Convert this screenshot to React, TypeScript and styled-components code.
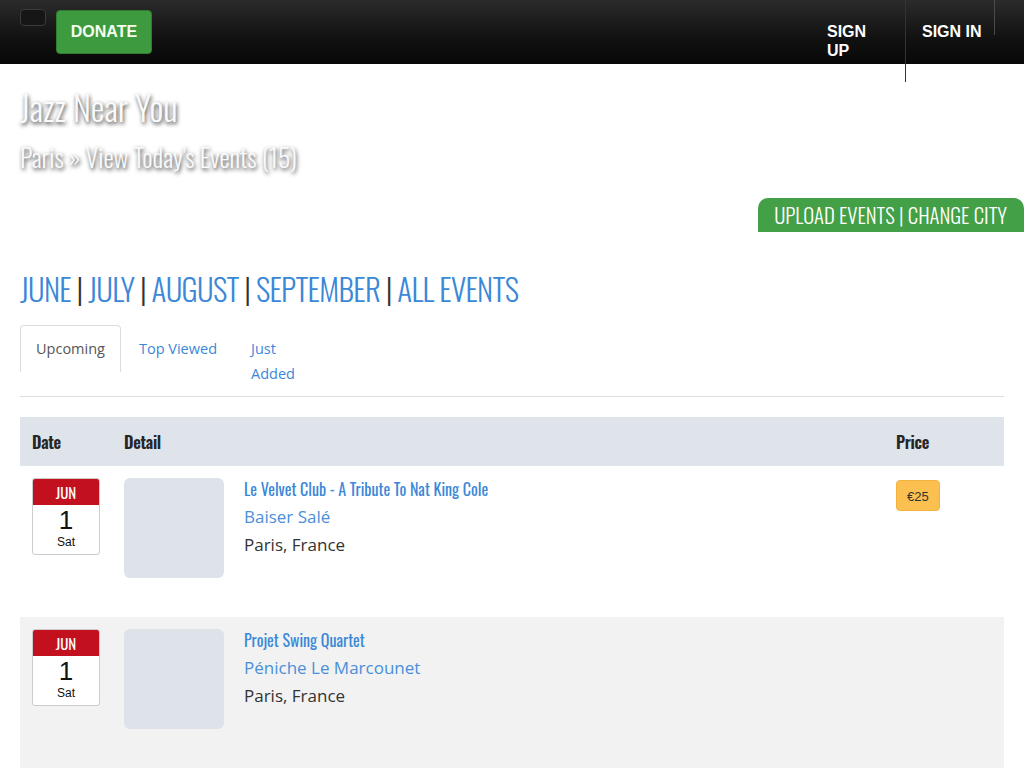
import styled, { createGlobalStyle } from "styled-components";

const GlobalStyle = createGlobalStyle`
  * { box-sizing: border-box; }
  body {
    margin: 0;
    background: #fff;
    font-family: "Open Sans", "Liberation Sans", sans-serif;
    color: #333;
  }
  a { text-decoration: none; }
`;

const oswald = `"Oswald", "DejaVu Sans Condensed", sans-serif`;

type EventItem = {
  month: string;
  day: string;
  weekday: string;
  title: string;
  venue: string;
  city: string;
  price?: string;
};

const events: EventItem[] = [
  {
    month: "JUN",
    day: "1",
    weekday: "Sat",
    title: "Le Velvet Club - A Tribute To Nat King Cole",
    venue: "Baiser Salé",
    city: "Paris, France",
    price: "€25",
  },
  {
    month: "JUN",
    day: "1",
    weekday: "Sat",
    title: "Projet Swing Quartet",
    venue: "Péniche Le Marcounet",
    city: "Paris, France",
  },
];

const months = ["JUNE", "JULY", "AUGUST", "SEPTEMBER", "ALL EVENTS"];

export default function App() {
  return (
    <>
      <GlobalStyle />
      <NavBar>
        <Toggler />
        <DonateButton>DONATE</DonateButton>
        <NavRight>
          <NavItem $wide>SIGN UP</NavItem>
          <NavItem $short>SIGN IN</NavItem>
        </NavRight>
      </NavBar>
      <Page>
        <Title>Jazz Near You</Title>
        <SubTitle>Paris » View Today's Events (15)</SubTitle>
        <ActionRow>
          <ActionTab>UPLOAD EVENTS | CHANGE CITY</ActionTab>
        </ActionRow>
        <MonthNav>
          {months.map((m, i) => (
            <span key={m}>
              {i > 0 && <Sep> | </Sep>}
              <MonthLink href="#">{m}</MonthLink>
            </span>
          ))}
        </MonthNav>
        <Tabs>
          <Tab $active>Upcoming</Tab>
          <Tab>Top Viewed</Tab>
          <Tab $narrow>Just Added</Tab>
        </Tabs>
        <Table>
          <HeadRow>
            <HeadCell>Date</HeadCell>
            <HeadCell>Detail</HeadCell>
            <HeadCell>Price</HeadCell>
          </HeadRow>
          {events.map((ev, i) => (
            <Row key={i} $striped={i % 2 === 1}>
              <Cell>
                <DateBadge>
                  <DateMonth>{ev.month}</DateMonth>
                  <DateDay>{ev.day}</DateDay>
                  <DateWeek>{ev.weekday}</DateWeek>
                </DateBadge>
              </Cell>
              <Cell>
                <Detail>
                  <Thumb />
                  <Info>
                    <EventTitle href="#">{ev.title}</EventTitle>
                    <Venue href="#">{ev.venue}</Venue>
                    <City>{ev.city}</City>
                  </Info>
                </Detail>
              </Cell>
              <Cell>{ev.price && <PriceTag>{ev.price}</PriceTag>}</Cell>
            </Row>
          ))}
        </Table>
      </Page>
    </>
  );
}

const NavBar = styled.header`
  height: 64px;
  background: linear-gradient(to bottom, #2b2b2b 0%, #111 60%, #080808 100%);
  display: flex;
  align-items: flex-start;
  padding-left: 20px;
`;

const Toggler = styled.div`
  width: 26px;
  height: 17px;
  margin-top: 9px;
  border: 1px solid #3a3a3a;
  border-radius: 4px;
  background: #161616;
`;

const DonateButton = styled.button`
  margin: 10px 0 0 10px;
  width: 96px;
  height: 44px;
  background: #3e9a3e;
  border: 1px solid #2f7d2f;
  border-radius: 4px;
  color: #f4fff0;
  font-family: "Liberation Sans", Arial, sans-serif;
  font-weight: bold;
  font-size: 16px;
`;

const NavRight = styled.ul`
  display: flex;
  margin: 0 29px 0 auto;
  padding: 0;
  list-style: none;
`;

const NavItem = styled.li<{ $wide?: boolean; $short?: boolean }>`
  width: ${(p) => (p.$wide ? "95px" : "89px")};
  height: ${(p) => (p.$short ? "35px" : "82px")};
  padding: 22px 16px 0;
  border-right: 1px solid ${(p) => (p.$short ? "#4a4a4a" : "#333")};
  color: #fff;
  font-family: "Liberation Sans", Arial, sans-serif;
  font-weight: bold;
  font-size: 16px;
  line-height: 19px;
  white-space: ${(p) => (p.$short ? "nowrap" : "normal")};
  position: relative;
  z-index: 1;
`;

const Page = styled.main`
  padding: 0 20px;
`;

const Title = styled.h1`
  margin: 23px 0 0;
  font-family: ${oswald};
  font-weight: 300;
  font-size: 34.5px;
  line-height: 40px;
  color: #fafafa;
  text-shadow: 1px 2px 4px rgba(0, 0, 0, 0.8);
`;

const SubTitle = styled.h2`
  margin: 13px 0 0;
  font-family: ${oswald};
  font-weight: 300;
  font-size: 25.7px;
  line-height: 32px;
  color: #fafafa;
  text-shadow: 1px 2px 4px rgba(0, 0, 0, 0.8);
`;

const ActionRow = styled.div`
  display: flex;
  justify-content: flex-end;
  margin: 26px -20px 0 0;
`;

const ActionTab = styled.a`
  height: 34px;
  padding: 0 17px 0 16px;
  background: #43a047;
  border-radius: 10px 10px 0 0;
  color: #fff;
  font-family: ${oswald};
  font-weight: 300;
  font-size: 20.8px;
  line-height: 34px;
`;

const MonthNav = styled.nav`
  margin-top: 36px;
  font-family: ${oswald};
  font-weight: 300;
  font-size: 31px;
  letter-spacing: -0.7px;
  line-height: 40px;
`;

const MonthLink = styled.a`
  color: #3b88d8;
`;

const Sep = styled.span`
  color: #333;
`;

const Tabs = styled.div`
  display: flex;
  align-items: flex-start;
  margin-top: 17px;
  border-bottom: 1px solid #ddd;
  height: 72px;
`;

const Tab = styled.a<{ $active?: boolean; $narrow?: boolean }>`
  padding: 10px 15px 12px;
  margin-right: 2px;
  font-size: 14.5px;
  line-height: 25px;
  color: ${(p) => (p.$active ? "#555" : "#3b88d8")};
  border: 1px solid ${(p) => (p.$active ? "#ddd" : "transparent")};
  border-bottom: none;
  border-radius: 4px 4px 0 0;
  background: ${(p) => (p.$active ? "#fff" : "transparent")};
  height: ${(p) => (p.$active ? "47px" : "auto")};
  width: ${(p) => (p.$narrow ? "76px" : "auto")};
`;

const Table = styled.div`
  margin-top: 20px;
`;

const HeadRow = styled.div`
  display: grid;
  grid-template-columns: 92px 1fr 120px;
  background: #dfe3ea;
  height: 49px;
  align-items: center;
`;

const HeadCell = styled.div`
  padding: 0 12px;
  font-family: ${oswald};
  font-weight: 600;
  font-size: 16.5px;
  letter-spacing: -0.3px;
  color: #262626;
`;

const Row = styled.div<{ $striped?: boolean }>`
  display: grid;
  grid-template-columns: 92px 1fr 120px;
  min-height: 151px;
  background: ${(p) => (p.$striped ? "#f2f2f2" : "#fff")};
`;

const Cell = styled.div`
  padding: 12px;
`;

const DateBadge = styled.div`
  width: 68px;
  border: 1px solid #ccc;
  border-radius: 3px;
  overflow: hidden;
  background: #fff;
  text-align: center;
  font-family: "Liberation Sans", Arial, sans-serif;
`;

const DateMonth = styled.div`
  background: #c3101f;
  color: #fff;
  height: 26px;
  line-height: 27px;
  font-family: ${oswald};
  font-weight: 400;
  font-size: 15px;
`;

const DateDay = styled.div`
  font-size: 26px;
  line-height: 30px;
  color: #111;
`;

const DateWeek = styled.div`
  font-size: 12px;
  line-height: 14px;
  padding-bottom: 5px;
  color: #111;
`;

const Detail = styled.div`
  display: flex;
  gap: 20px;
`;

const Thumb = styled.div`
  width: 100px;
  height: 100px;
  border-radius: 6px;
  background: #dee3ea;
  flex-shrink: 0;
`;

const Info = styled.div`
  display: flex;
  flex-direction: column;
  align-items: flex-start;
`;

const EventTitle = styled.a`
  font-family: ${oswald};
  font-weight: 400;
  font-size: 16px;
  line-height: 22px;
  color: #3b88d8;
`;

const Venue = styled.a`
  margin-top: 6px;
  font-size: 17px;
  line-height: 22px;
  color: #4a8fd8;
`;

const City = styled.div`
  margin-top: 6px;
  font-size: 17px;
  line-height: 22px;
  color: #333;
`;

const PriceTag = styled.span`
  display: inline-block;
  margin-top: 2px;
  padding: 0 10px;
  height: 31px;
  line-height: 31px;
  background: #fbc04f;
  border: 1px solid #f3b23f;
  border-radius: 4px;
  font-family: "Liberation Sans", Arial, sans-serif;
  font-size: 13px;
  color: #333;
`;
